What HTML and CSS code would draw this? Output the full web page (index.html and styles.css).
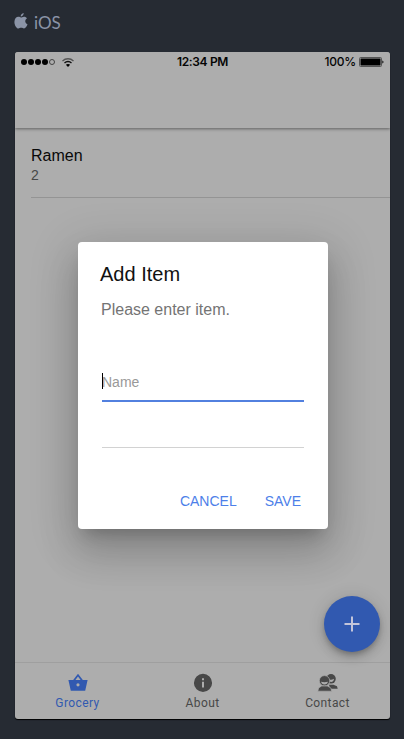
FILE: index.html
```html
<!DOCTYPE html>
<html lang="en">
<head>
<meta charset="utf-8">
<title>Grocery</title>
<link rel="stylesheet" href="styles.css">
</head>
<body>
<header class="platform">
  <svg class="apple" viewBox="0 0 14 16"><path d="M9.7 0C9.8 1.6 8.500 3.500 6.700 3.500 6.500 2 8 .3 9.700 0ZM7 4.500C7.700 4.500 8.400 3.700 10 3.700c1.300 0 2.400.7 3 1.600-2.500 1.500-2.200 4.900.5 6-.6 1.800-2 4.200-3.500 4.200-1.100 0-1.500-.7-2.800-.7s-1.800.7-2.800.7C2.500 15.500.4 12 .4 8.900.4 5.600 2.400 3.800 4.400 3.800c1.200 0 2 .7 2.600.7Z"/></svg>
  <span>iOS</span>
</header>
<main class="phone">
  <div class="toolbar">
    <div class="status">
      <div class="signal"><i></i><i></i><i></i><i></i><i class="empty"></i>
        <svg class="wifi" viewBox="0 0 12 9"><path class="outer" d="M.5 3C3.600 0 8.400 0 11.500 3"/><path class="inner" d="M2.500 5c2-2 5-2 7 0"/><path class="dot" d="M6 9 3.900 6.800c1.200-1.100 3-1.100 4.200 0Z"/></svg>
      </div>
      <div class="time">12:34 PM</div>
      <div class="power">100%<svg class="battery" viewBox="0 0 25 10"><rect class="case" x=".5" y=".5" width="22" height="9" rx="1"/><rect x="1.500" y="1.500" width="20" height="7"/><path d="M23.400 3.500c1.400.4 1.400 2.600 0 3Z"/></svg></div>
    </div>
  </div>
  <section class="content">
    <div class="item"><h2>Ramen</h2><p>2</p></div>
    <button class="fab" aria-label="Add"><svg viewBox="0 0 16 16"><path d="M8 .5v15M.5 8h15"/></svg></button>
  </section>
  <nav class="tabs">
    <a class="tab active"><svg viewBox="0 0 22 22"><path fill-rule="evenodd" d="M11 1.700 15.800 8H20.600L18.200 18.800H3.800L1.400 8H6.200ZM11 4.500 8.400 8h5.200ZM11 11.200a1.600 1.600 0 1 0 0 3.200 1.600 1.600 0 0 0 0-3.200Z"/></svg><span>Grocery</span></a>
    <a class="tab"><svg viewBox="0 0 22 22"><path fill-rule="evenodd" d="M11 1.800a9.100 9.100 0 1 0 0 18.200 9.100 9.100 0 0 0 0-18.200ZM10 6.200h2v2h-2ZM10 9.800h2v5.800h-2Z"/></svg><span>About</span></a>
    <a class="tab"><svg viewBox="0 0 22 22"><circle cx="14" cy="6.800" r="4.800"/><path d="M12 12.700h4.500l3.500 1.500.7 2.600H13Z"/><path class="light" d="M12 7.800c2 .2 3.800-.2 5-1 0 1.900-1.200 3.100-3 3.100-1 0-1.800-.8-2-2.100Z"/><circle class="front" cx="7.500" cy="8.800" r="5.200"/><path class="front" d="M4.600 14h5.800l3.400 1.900.9 3.300H.8l.8-3.300Z"/><path class="light" d="M4.100 9.800c2.200.7 4.600.6 6.800 0-.3 1.800-1.500 2.700-3.400 2.700s-3-.9-3.400-2.700Z"/></svg><span>Contact</span></a>
  </nav>
  <div class="shade">
    <form class="dialog">
      <h1>Add Item</h1>
      <p class="message">Please enter item.</p>
      <div class="field focused"><span class="caret"></span>Name</div>
      <div class="field"></div>
      <div class="actions"><span>CANCEL</span><span>SAVE</span></div>
    </form>
  </div>
</main>
</body>
</html>
```
FILE: styles.css
```css
* { box-sizing: border-box; }
body { margin: 0; width: 404px; height: 739px; overflow: hidden; background: #262b33; font-family: "Liberation Sans", Arial, sans-serif; }
h1, h2, p { margin: 0; font-weight: 400; }
.platform { height: 52px; padding: 13px 0 0 14px; display: flex; align-items: flex-start; gap: 6px; color: #8b94a7; font: 17px/20px Lato, sans-serif; }
.apple { width: 14px; height: 16px; fill: currentColor; }
.phone { position: relative; display: flex; flex-direction: column; width: 375px; height: 667px; margin-left: 15px; overflow: hidden; border-radius: 3px; background: #adadad; box-shadow: 0 1px 1px #000; }
.toolbar { position: relative; height: 76px; background: #adadad; box-shadow: 0 1px 3px rgba(0,0,0,.45); }
.status { display: grid; grid-template-columns: 1fr auto 1fr; align-items: center; height: 20px; padding: 0 6px; color: #050505; font: 600 12px/20px Inter, sans-serif; letter-spacing: -.35px; }
.signal { display: flex; align-items: center; gap: 1px; }
.signal i { width: 6px; height: 6px; border-radius: 50%; background: #000; }
.signal .empty { background: none; border: 1px solid #444; }
.wifi { width: 12px; height: 9px; margin-left: 6px; fill: none; stroke: #111; stroke-width: 1.3; }
.wifi .outer { stroke: #555; }
.wifi .dot { fill: #000; stroke: none; }
.power { display: flex; justify-content: flex-end; align-items: center; gap: 3px; font-weight: 500; letter-spacing: -.25px; }
.battery { width: 25px; height: 10px; }
.battery .case { fill: none; stroke: #555; }
.content { position: relative; flex: 1; }
.item { height: 70px; margin-left: 16px; padding-top: 18px; border-bottom: 1px solid #949494; }
.item h2 { color: #090909; font-size: 16px; line-height: 19px; }
.item p { margin-top: 1px; color: #484848; font-size: 14px; line-height: 18px; }
.fab { position: absolute; right: 10px; bottom: 10px; display: grid; place-items: center; width: 56px; height: 56px; padding: 0; border: 0; border-radius: 50%; background: #3159b0; box-shadow: 0 3px 5px -1px rgba(0,0,0,.2), 0 6px 10px rgba(0,0,0,.14), 0 1px 18px rgba(0,0,0,.12); }
.fab svg { width: 16px; height: 16px; stroke: #c3c5da; stroke-width: 2; }
.tabs { display: grid; grid-template-columns: repeat(3, 1fr); height: 57px; border-top: 1px solid #9f9f9f; }
.tab { display: flex; flex-direction: column; align-items: center; gap: 1px; padding-top: 9px; color: #484848; font: 12px/16px Roboto, sans-serif; letter-spacing: .4px; }
.tab svg { width: 22px; height: 22px; fill: currentColor; }
.active { color: #3159b0; }
.tab .light { fill: #adadad; }
.tab .front { stroke: #adadad; stroke-width: .7; }
.shade { position: absolute; inset: 0; display: grid; place-items: center; }
.dialog { width: 250px; height: 287px; margin-left: 1px; display: flex; flex-direction: column; padding: 20px 24px 14px; border-radius: 4px; background: #fff; box-shadow: 0 11px 15px -7px rgba(0,0,0,.2), 0 24px 38px 3px rgba(0,0,0,.14), 0 9px 46px 8px rgba(0,0,0,.12); }
.dialog h1 { margin-left: -2px; color: #111; font-size: 20px; line-height: 24px; }
.message { margin: 14px 0 0 -1px; color: #747474; font-size: 16px; line-height: 20px; }
.field { width: 202px; height: 46px; border-bottom: 1px solid #d2d2d2; color: #999; font-size: 14px; line-height: 18px; }
.focused { position: relative; height: 41px; margin-top: 41px; padding-top: 12px; border-bottom: 2px solid #5280df; }
.caret { position: absolute; left: 0; top: 12px; width: 1px; height: 16px; background: #000; }
.actions { display: flex; justify-content: flex-end; gap: 28px; margin-top: 44px; padding-right: 3px; color: #4d7fe9; font-size: 14px; line-height: 18px; }
```
